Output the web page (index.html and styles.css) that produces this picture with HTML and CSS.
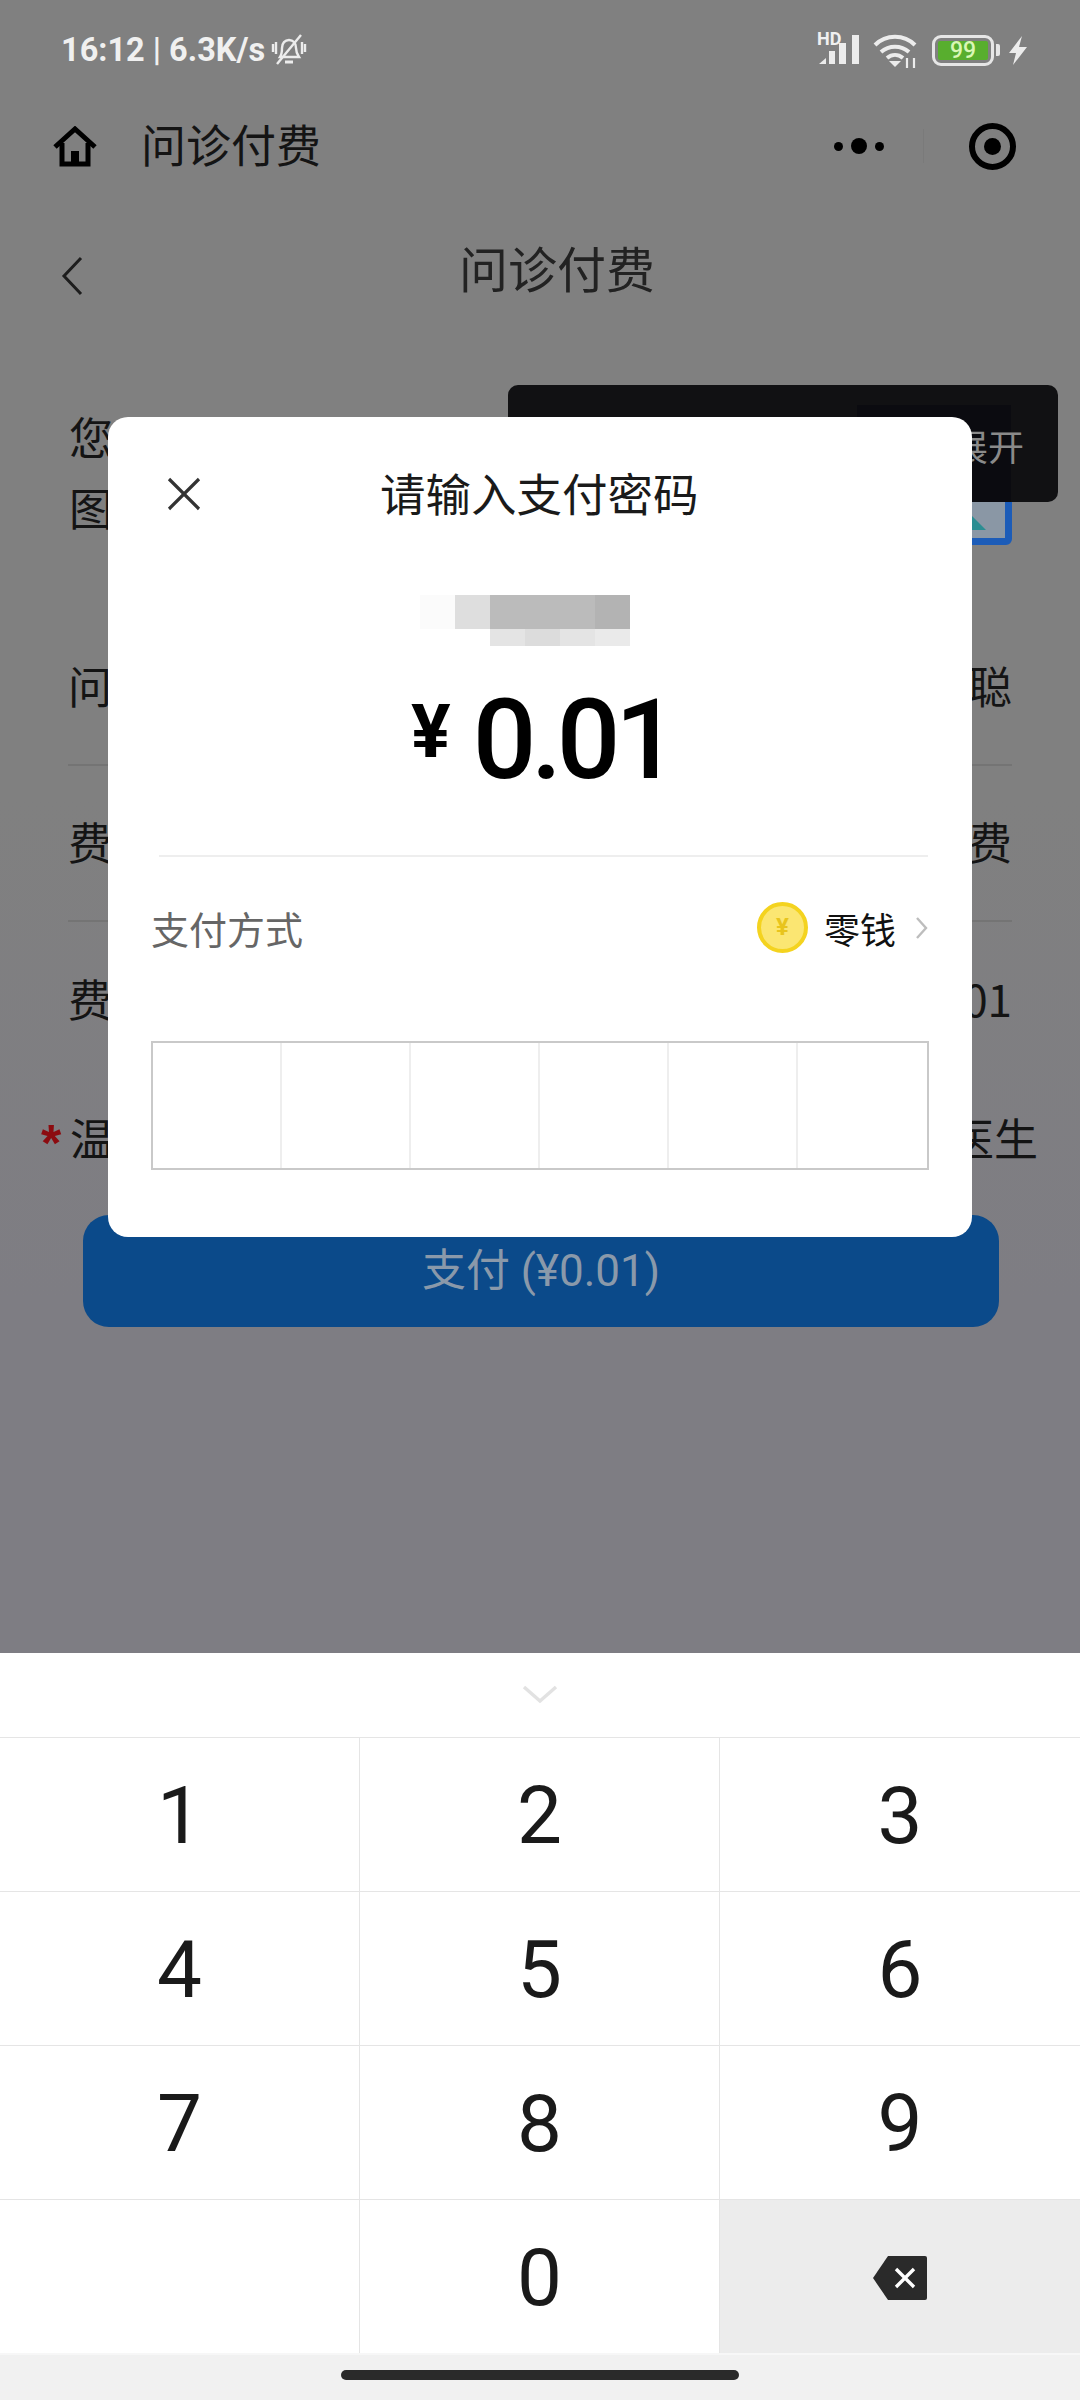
FILE: index.html
```html
<!DOCTYPE html>
<html lang="zh-CN">
<head>
    <meta charset="UTF-8">
    <title>问诊付费</title>
    <link rel="stylesheet" href="styles.css">
</head>
<body>
<div class="screen">

    <!-- status bar -->
    <div class="status">
        <span class="status-text">16:12 | 6.3K/s</span>
        <svg class="bell" width="36" height="34" viewBox="0 0 36 34" fill="none" stroke="#ececec" stroke-width="2.4">
            <path d="M9 24c2-3 2-6 2-9 0-5 3-8 7-8s7 3 7 8c0 3 1 6 3 9z"/>
            <path d="M14 29h8" stroke-width="3"/>
            <path d="M6 31L30 2"/>
            <path d="M2 11v8M5 9v12M31 9v12M34 11v8"/>
        </svg>
        <div class="status-right">
            <div class="signal">
                <span class="hd">HD</span>
                <svg width="43" height="31" viewBox="0 0 43 31" fill="#ececec">
                    <path d="M2 30l7-6v6z"/>
                    <rect x="12" y="17" width="6" height="13"/>
                    <rect x="22" y="9" width="7" height="21"/>
                    <rect x="35" y="1" width="7" height="29"/>
                </svg>
            </div>
            <svg class="wifi" width="44" height="35" viewBox="0 0 44 35" fill="none" stroke="#ececec" stroke-width="4">
                <path d="M2 11c11-11 29-11 40 0"/>
                <path d="M8 18c8-7 20-7 28 0"/>
                <path d="M14 24c5-4 11-4 16 0"/>
                <path d="M16 27l6 6 6-6z" fill="#ececec" stroke="none"/>
                <path d="M34 24v10M41 24v10" stroke-width="2.2"/>
            </svg>
            <div class="battery"><div class="battery-level">99</div></div>
            <div class="battery-nub"></div>
            <svg class="bolt" width="20" height="29" viewBox="0 0 20 29" fill="#ececec">
                <path d="M14 0L1 17h7L5 29l14-18h-8z"/>
            </svg>
        </div>
    </div>

    <!-- mini program bar -->
    <div class="nav">
        <svg class="home" width="44" height="41" viewBox="0 0 44 41" fill="none" stroke="#000" stroke-width="5">
            <path d="M2 21L22 3l20 18" stroke-linejoin="miter"/>
            <path d="M9 17v21h26V17"/>
            <rect x="18" y="25" width="8" height="13" fill="#000" stroke="none"/>
        </svg>
        <span class="nav-title">问诊付费</span>
        <div class="capsule">
            <div class="dots">
                <span class="dot"></span>
                <span class="dot dot-big"></span>
                <span class="dot"></span>
            </div>
            <div class="capsule-line"></div>
            <div class="target"><span class="target-in"></span></div>
        </div>
    </div>

    <!-- page header -->
    <div class="page-head">
        <svg class="back" width="22" height="40" viewBox="0 0 22 40" fill="none" stroke="#1d1d1d" stroke-width="3">
            <path d="M20 2L3 20l17 18"/>
        </svg>
        <h1 class="page-title">问诊付费</h1>
    </div>

    <!-- page behind the dialog -->
    <div class="intro">
        <p class="intro-text">您正在为本次问诊付费<br>图文问诊服务</p>
        <div class="qr-thumb"><span class="qr-tri"></span></div>
    </div>
    <div class="row row-line"><span>问诊医生</span><span>李聪</span></div>
    <div class="row row-line"><span>费用类型</span><span>问诊费</span></div>
    <div class="row"><span>费用金额</span><span>¥0.01</span></div>
    <div class="notice"><span class="star">*</span><span>温馨提示：付款成功后如需退款请您联系问诊医生</span></div>
    <button class="pay-btn">支付 (¥0.01)</button>

    <!-- floating tip, sits over the page -->
    <div class="tip">
        <div class="tip-block"></div>
        <span class="tip-text">展开</span>
    </div>

    <!-- password dialog -->
    <div class="dialog">
        <div class="dialog-head">
            <svg class="close" width="34" height="34" viewBox="0 0 34 34" fill="none" stroke="#333" stroke-width="3.2">
                <path d="M2 2l30 30M32 2L2 32"/>
            </svg>
            <span class="dialog-title">请输入支付密码</span>
        </div>
        <div class="merchant">
            <i class="px1"></i><i class="px2"></i><i class="px3"></i><i class="px3"></i><i class="px3"></i><i class="px4"></i>
            <i></i><i></i><i class="px5"></i><i class="px6"></i><i class="px5"></i><i class="px7"></i>
        </div>
        <div class="amount"><span class="yen">¥</span><span class="sum">0.01</span></div>
        <div class="dialog-line"></div>
        <div class="method">
            <span class="method-label">支付方式</span>
            <div class="method-value">
                <div class="coin">¥</div>
                <span class="method-name">零钱</span>
                <svg width="13" height="24" viewBox="0 0 13 24" fill="none" stroke="#bdbdbd" stroke-width="2.4">
                    <path d="M2 2l9 10-9 10"/>
                </svg>
            </div>
        </div>
        <div class="pin">
            <div class="pin-cell"></div>
            <div class="pin-cell"></div>
            <div class="pin-cell"></div>
            <div class="pin-cell"></div>
            <div class="pin-cell"></div>
            <div class="pin-cell"></div>
        </div>
    </div>

    <!-- number keyboard -->
    <div class="keyboard">
        <div class="kb-top">
            <svg width="36" height="19" viewBox="0 0 36 19" fill="none" stroke="#e2e2e2" stroke-width="3.4">
                <path d="M2 2l16 14L34 2"/>
            </svg>
        </div>
        <div class="keys">
            <div class="key">1</div>
            <div class="key">2</div>
            <div class="key">3</div>
            <div class="key">4</div>
            <div class="key">5</div>
            <div class="key">6</div>
            <div class="key">7</div>
            <div class="key">8</div>
            <div class="key">9</div>
            <div class="key"></div>
            <div class="key">0</div>
            <div class="key key-del">
                <svg width="54" height="44" viewBox="0 0 54 44" fill="#2a2a2a">
                    <path d="M15 0h37a2 2 0 0 1 2 2v40a2 2 0 0 1-2 2H15L0 22z"/>
                    <path d="M23 13l18 18M41 13L23 31" stroke="#fff" stroke-width="3.4" fill="none"/>
                </svg>
            </div>
        </div>
        <div class="home-bar"><span class="handle"></span></div>
    </div>

</div>
</body>
</html>
```

FILE: styles.css
```css
* {
    box-sizing: border-box;
}

body {
    margin: 0;
    font-family: "Noto Sans CJK SC", Roboto, sans-serif;
}

.screen {
    position: relative;
    width: 1080px;
    height: 2400px;
    display: flex;
    flex-direction: column;
    overflow: hidden;
    background: linear-gradient(#808080 0, #808080 800px, #7e7d83 1300px);
    color: #141414;
}

/* status bar */
.status {
    height: 100px;
    display: flex;
    align-items: center;
    padding: 0 52px 0 61px;
    color: #f0f0f0;
}

.status-text {
    font-family: Roboto, sans-serif;
    font-size: 32.5px;
    font-weight: 700;
}

.bell {
    margin-left: 6px;
}

.status-right {
    margin-left: auto;
    display: flex;
    align-items: center;
}

.signal {
    position: relative;
    width: 43px;
    height: 31px;
    margin-top: -2px;
}

.signal svg {
    display: block;
}

.hd {
    position: absolute;
    left: 0;
    top: -3px;
    font-family: Roboto, sans-serif;
    font-size: 18px;
    font-weight: 700;
    line-height: 15px;
}

.wifi {
    margin-left: 13px;
    margin-top: 2px;
}

.battery {
    width: 62px;
    height: 31px;
    margin-left: 15px;
    border: 3px solid #e6e6e6;
    border-radius: 9px;
    padding: 3px;
}

.battery-level {
    height: 100%;
    background: #58ae2e;
    border-radius: 2px;
    color: #d9f7b5;
    font-family: Roboto, sans-serif;
    font-size: 23px;
    font-weight: 500;
    line-height: 19px;
    text-align: center;
}

.battery-nub {
    width: 4px;
    height: 12px;
    margin-left: 2px;
    background: #e6e6e6;
    border-radius: 0 2px 2px 0;
}

.bolt {
    margin-left: 8px;
}

/* mini program bar */
.nav {
    height: 92px;
    display: flex;
    align-items: center;
    padding: 0 64px 0 53px;
}

.home {
    flex: none;
}

.nav-title {
    margin: -4px 0 0 44px;
    font-size: 45px;
    line-height: 60px;
}

.capsule {
    margin-left: auto;
    display: flex;
    align-items: center;
}

.dots {
    display: flex;
    align-items: center;
    gap: 8px;
}

.dot {
    width: 9px;
    height: 9px;
    border-radius: 50%;
    background: #000;
}

.dot-big {
    width: 16px;
    height: 16px;
}

.capsule-line {
    width: 1px;
    height: 34px;
    margin-left: 39px;
    background: #7a7a7a;
}

.target {
    width: 47px;
    height: 47px;
    margin-left: 45px;
    border: 6px solid #000;
    border-radius: 50%;
    display: flex;
    align-items: center;
    justify-content: center;
}

.target-in {
    width: 17px;
    height: 17px;
    background: #000;
    border-radius: 50%;
}

/* page header */
.page-head {
    height: 156px;
    display: flex;
    align-items: center;
    padding-left: 61px;
    color: #222;
}

.back {
    margin-top: 12px;
}

.page-title {
    margin: -7px 0 0 376px;
    font-size: 49px;
    font-weight: 400;
}

/* page behind the dialog */
.intro {
    height: 262px;
    padding: 53px 68px 0 69px;
    display: flex;
    justify-content: space-between;
}

.intro-text {
    margin: 0;
    font-size: 44px;
    line-height: 71px;
}

.qr-thumb {
    position: relative;
    width: 80px;
    height: 83px;
    margin-top: 61px;
    background: #8a97a5;
    border: 7px solid #1c5cb8;
    border-radius: 6px;
    overflow: hidden;
}

.qr-tri {
    position: absolute;
    left: 33px;
    bottom: 8px;
    border-left: 14px solid #2b8d92;
    border-top: 14px solid transparent;
}

.row {
    height: 156px;
    margin: 0 68px;
    padding-bottom: 4px;
    display: flex;
    align-items: center;
    justify-content: space-between;
    font-size: 44px;
}

.row-line {
    border-bottom: 2px solid #747474;
}

.notice {
    height: 118px;
    padding: 0 42px 0 41px;
    display: flex;
    align-items: center;
    font-size: 44px;
    white-space: nowrap;
}

.notice span:last-child {
    margin-left: auto;
}

.star {
    color: #8c0b10;
    font-family: "Liberation Sans", sans-serif;
    font-size: 52px;
    font-weight: 700;
    line-height: 44px;
    margin-top: 12px;
}

.pay-btn {
    width: 916px;
    height: 112px;
    margin: 19px 0 0 83px;
    padding-bottom: 9px;
    border: 0;
    border-radius: 26px;
    background: #0b4a8a;
    color: #8a99aa;
    font-family: Roboto, "Noto Sans CJK SC", sans-serif;
    font-size: 44px;
}

/* floating tip */
.tip {
    position: absolute;
    left: 508px;
    top: 385px;
    width: 550px;
    height: 117px;
    background: #111113;
    border-radius: 10px;
}

.tip-block {
    position: absolute;
    left: 349px;
    top: 20px;
    width: 154px;
    height: 97px;
    background: #0b0b10;
}

.tip-text {
    position: absolute;
    right: 34px;
    top: 35px;
    color: #8a8a8a;
    font-size: 36px;
    line-height: 50px;
}

/* password dialog */
.dialog {
    position: absolute;
    left: 108px;
    top: 417px;
    width: 864px;
    height: 820px;
    padding-top: 41px;
    background: #fff;
    border-radius: 20px;
    display: flex;
    flex-direction: column;
}

.dialog-head {
    height: 72px;
    display: flex;
    align-items: center;
    padding-left: 59px;
}

.dialog-title {
    margin: -4px 0 0 179px;
    font-size: 45.5px;
    color: #1a1a1a;
}

.merchant {
    width: 210px;
    margin: 65px 0 0 312px;
    display: grid;
    grid-template-columns: repeat(6, 35px);
    grid-template-rows: 34px 17px;
}

.px1 { background: #fbfbfb; }
.px2 { background: #dedede; }
.px3 { background: #bbb; }
.px4 { background: #b3b3b3; }
.px5 { background: #e4e4e4; }
.px6 { background: #dcdcdc; }
.px7 { background: #eaeaea; }

.amount {
    height: 100px;
    margin-top: 44px;
    padding-left: 303px;
    display: flex;
    color: #000;
    font-family: Roboto, sans-serif;
    line-height: 100px;
}

.yen {
    font-size: 74px;
    font-weight: 700;
    line-height: 70px;
    margin-top: 7px;
}

.sum {
    margin-left: 22px;
    font-size: 112px;
    font-weight: 500;
    letter-spacing: -5.4px;
}

.dialog-line {
    height: 2px;
    margin: 65px 44px 0 51px;
    background: #eee;
}

.method {
    height: 144px;
    padding: 0 44px 3px 43px;
    display: flex;
    align-items: center;
    justify-content: space-between;
}

.method-label {
    font-size: 38px;
    color: #666;
}

.method-value {
    display: flex;
    align-items: center;
}

.coin {
    width: 51px;
    height: 51px;
    border: 4px solid #f4d31f;
    border-radius: 50%;
    background: #fbe672;
    color: #e8c41c;
    font-family: Roboto, sans-serif;
    font-size: 24px;
    font-weight: 700;
    line-height: 43px;
    text-align: center;
}

.method-name {
    margin: 0 19px 0 16px;
    font-size: 36px;
    color: #111;
}

.pin {
    height: 129px;
    margin: 40px 43px 0;
    border: 2px solid #c9c9c9;
    display: grid;
    grid-template-columns: repeat(6, 1fr);
}

.pin-cell {
    border-right: 2px solid #eee;
}

.pin-cell:last-child {
    border-right: 0;
}

/* number keyboard */
.keyboard {
    position: absolute;
    left: 0;
    right: 0;
    top: 1653px;
    bottom: 0;
    background: #fff;
    display: flex;
    flex-direction: column;
}

.kb-top {
    height: 84px;
    padding-top: 32px;
    display: flex;
    justify-content: center;
    align-items: flex-start;
}

.keys {
    display: grid;
    grid-template-columns: 360px 360px 360px;
    grid-auto-rows: 154px;
}

.key {
    padding-top: 2px;
    border-top: 1.5px solid #e5e5e5;
    border-right: 1.5px solid #e5e5e5;
    display: flex;
    align-items: center;
    justify-content: center;
    font-family: Roboto, sans-serif;
    font-size: 80px;
    color: #1a1a1a;
}

.key:nth-child(3n) {
    border-right: 0;
}

.key-del {
    background: #ececec;
}

.home-bar {
    flex: 1;
    background: #f1f1f1;
    border-top: 2px solid #f7f7f7;
    display: flex;
    justify-content: center;
    padding-top: 15px;
}

.handle {
    width: 398px;
    height: 10px;
    background: #2a2a2a;
    border-radius: 5px;
}
```
